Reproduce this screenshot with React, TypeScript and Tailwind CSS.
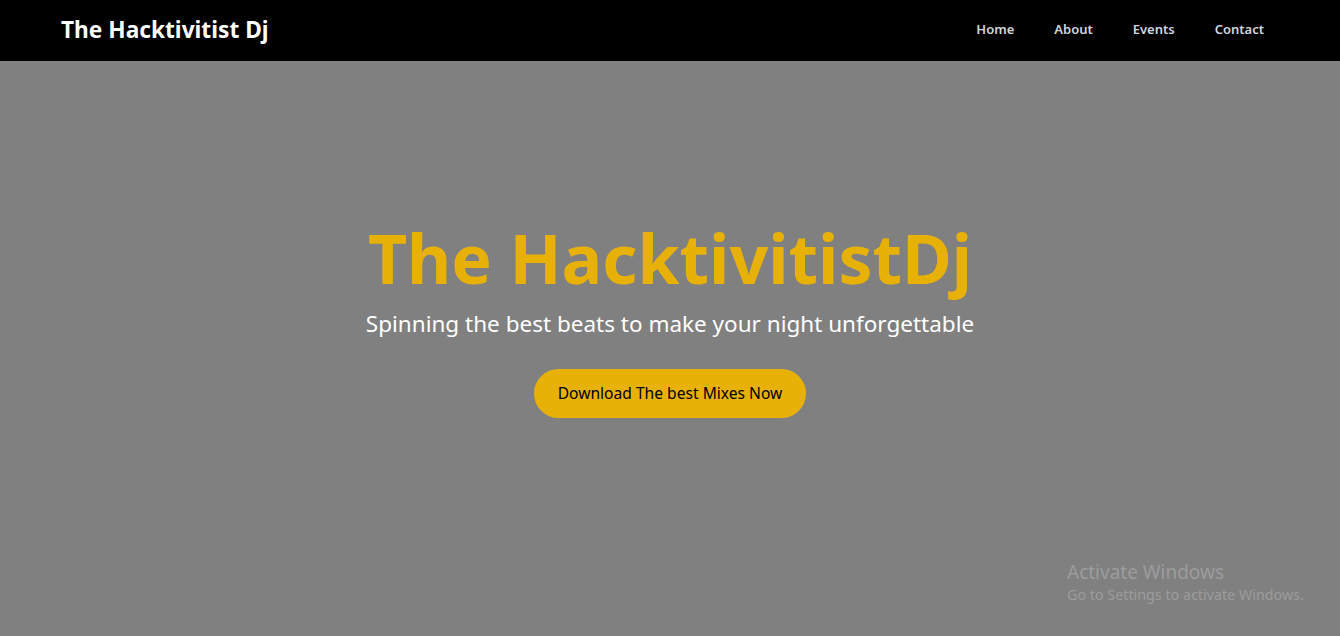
export default function App() {
  return (
    <div className="relative w-full h-[636px] overflow-hidden bg-[#808080] font-['Noto_Sans',sans-serif]">
      <header className="flex h-[61px] items-center justify-between bg-black pl-[61px] pr-[76px]">
        <h1 className="-mt-[1px] text-[22.7px] font-bold text-white">The Hacktivitist Dj</h1>
        <nav className="-mt-[2px]">
          <ul className="flex gap-10 text-[13px] font-semibold text-gray-300">
            <li>Home</li>
            <li>About</li>
            <li>Events</li>
            <li>Contact</li>
          </ul>
        </nav>
      </header>

      <section className="flex flex-col items-center pt-[163px] text-center">
        <h2 className="text-[68px] leading-none font-bold text-[#e8b107]">The HacktivitistDj</h2>
        <p className="mt-[15px] text-[22.5px] text-white">Spinning the best beats to make your night unforgettable</p>
        <button className="mt-[28px] rounded-full bg-[#e8b107] px-6 py-[13px] text-[15.6px] text-black">
          Download The best Mixes Now
        </button>
      </section>

      <div className="absolute left-[1067px] top-[560px] text-[#9c9c9c]">
        <p className="text-[19px] leading-6">Activate Windows</p>
        <p className="text-[14.3px]">Go to Settings to activate Windows.</p>
      </div>
    </div>
  );
}
